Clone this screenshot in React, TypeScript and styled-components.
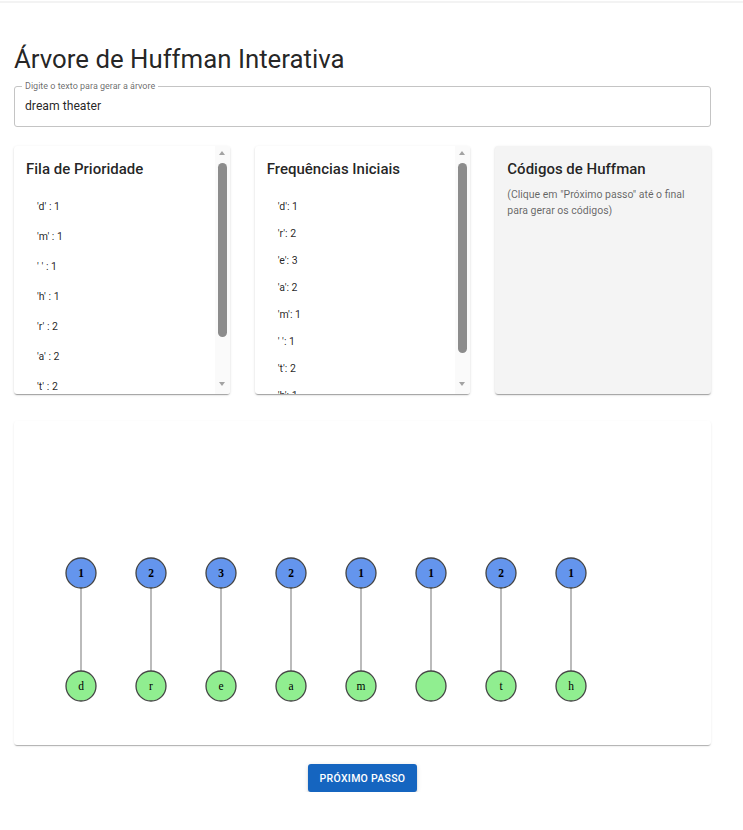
import styled, { createGlobalStyle } from "styled-components";

const GlobalStyle = createGlobalStyle`
    html, body {
        margin:0;
        padding:0;
        background:#fff;
    }
    body {
        font-family:Roboto, "Liberation Sans", Arial, sans-serif;
        color:rgba(0,0,0,0.87);
    }
    * { box-sizing:border-box; }
`;

const TopLine = styled.div`
    height:3px;
    border-bottom:2px solid #f3f3f3;
`;

const Page = styled.main`
    width:697px;
    margin-left:14px;
    padding-top:40px;
    display:flex;
    flex-direction:column;
`;

const Title = styled.h1`
    margin:0 0 11px;
    font-size:25.8px;
    font-weight:400;
    line-height:32px;
`;

const Field = styled.div`
    position:relative;
    height:41px;
    padding:0 11px;
    border:1px solid #c4c4c4;
    border-radius:3px;
    display:flex;
    align-items:center;

    input{
        border:none;
        outline:none;
        padding:0;
        margin-top:-2px;
        margin-left:-1px;
        width:100%;
        font-family:inherit;
        font-size:12.2px;
        color:rgba(0,0,0,0.87);
        background:transparent;
    }
`;

const FieldLabel = styled.label`
    position:absolute;
    top:-6px;
    left:7px;
    padding:0 3px;
    background:#fff;
    font-size:9px;
    line-height:11px;
    color:rgba(0,0,0,0.6);
`;

const Columns = styled.section`
    display:grid;
    grid-template-columns:repeat(3, 1fr);
    column-gap:25px;
    margin-top:19px;
`;

const Card = styled.div<{ $muted?: boolean }>`
    position:relative;
    height:248px;
    overflow:hidden;
    padding:11px 12px;
    border-radius:3px;
    background:${p => p.$muted ? "#f4f4f4" : "#fff"};
    box-shadow:0px 2px 1px -1px rgba(0,0,0,0.2), 0px 1px 1px 0px rgba(0,0,0,0.14), 0px 1px 3px 0px rgba(0,0,0,0.12);
`;

const ScrollTrack = styled.div`
    position:absolute;
    top:0;
    right:0;
    bottom:0;
    width:15px;
    background:#fafafa;
`;

const Arrow = styled.span<{ $down?: boolean }>`
    position:absolute;
    left:4px;
    ${p => p.$down ? "bottom:8px;" : "top:5px;"}
    width:0;
    height:0;
    border-left:3.5px solid transparent;
    border-right:3.5px solid transparent;
    ${p => p.$down ? "border-top:4px solid #a3a3a3;" : "border-bottom:4px solid #a3a3a3;"}
`;

const Thumb = styled.span`
    position:absolute;
    left:3px;
    width:9px;
    border-radius:5px;
    background:#8c8c8c;
`;

const CardTitle = styled.h2`
    margin:0;
    font-size:15px;
    font-weight:500;
    line-height:24px;
    color:rgba(0,0,0,0.87);
`;

const List = styled.ul<{ $step: number }>`
    list-style:none;
    margin:${p => p.$step === 30 ? "11px" : "12px"} 0 0;
    padding:0 0 14px 11px;

    li{
        height:${p => p.$step}px;
        line-height:${p => p.$step}px;
        font-size:10.5px;
        color:rgba(0,0,0,0.87);
        white-space:pre;
    }
`;

const Hint = styled.p`
    margin:6px 0 0;
    font-size:10.5px;
    line-height:16px;
    color:rgba(0,0,0,0.6);
`;

const TreePanel = styled.div`
    margin-top:27px;
    height:324px;
    border-radius:3px;
    background:#fff;
    box-shadow:0px 2px 1px -1px rgba(0,0,0,0.2), 0px 1px 1px 0px rgba(0,0,0,0.1), 0px 1px 3px 0px rgba(0,0,0,0.06);

    svg{ display:block; }
`;

const Actions = styled.div`
    display:flex;
    justify-content:center;
    margin-top:19px;
`;

const StepButton = styled.button`
    height:28px;
    padding:0 12px;
    border:none;
    border-radius:3px;
    background:#1565c0;
    color:#fff;
    font-family:inherit;
    font-size:10.5px;
    font-weight:500;
    letter-spacing:0.3px;
    text-transform:uppercase;
    cursor:pointer;
    box-shadow:0px 3px 1px -2px rgba(0,0,0,0.2), 0px 2px 2px 0px rgba(0,0,0,0.14), 0px 1px 5px 0px rgba(0,0,0,0.12);
`;

function Scrollbar({ thumbTop, thumbHeight }: { thumbTop: number; thumbHeight: number }) {
    return (
        <ScrollTrack aria-hidden>
            <Arrow />
            <Thumb style={{ top: thumbTop, height: thumbHeight }} />
            <Arrow $down />
        </ScrollTrack>
    );
}

const text = "dream theater";

function countFreq(s: string) {
    const map = new Map<string, number>();
    for (const c of s) map.set(c, (map.get(c) || 0) + 1);
    return [...map.entries()];
}

const freqs = countFreq(text);
const queue = [...freqs].sort((a, b) => a[1] - b[1]);

export default function App() {
    return (
        <>
            <GlobalStyle />
            <TopLine />
            <Page>
                <Title>Árvore de Huffman Interativa</Title>
                <Field>
                    <FieldLabel htmlFor="texto">Digite o texto para gerar a árvore</FieldLabel>
                    <input id="texto" type="text" defaultValue={text} />
                </Field>

                <Columns>
                    <Card>
                        <CardTitle>Fila de Prioridade</CardTitle>
                        <List $step={30}>
                            {queue.map(([c, n]) => (
                                <li key={c}>'{c}' : {n}</li>
                            ))}
                        </List>
                        <Scrollbar thumbTop={17} thumbHeight={174} />
                    </Card>
                    <Card>
                        <CardTitle>Frequências Iniciais</CardTitle>
                        <List $step={27}>
                            {freqs.map(([c, n]) => (
                                <li key={c}>'{c}': {n}</li>
                            ))}
                        </List>
                        <Scrollbar thumbTop={17} thumbHeight={190} />
                    </Card>
                    <Card $muted>
                        <CardTitle>Códigos de Huffman</CardTitle>
                        <Hint>(Clique em "Próximo passo" até o final para gerar os códigos)</Hint>
                    </Card>
                </Columns>

                <TreePanel>
                    <svg width="697" height="324">
                        {freqs.map(([c, n], i) => {
                            const x = 67 + i * 70;
                            return (
                                <g key={c}>
                                    <line x1={x} y1={152} x2={x} y2={265} stroke="#bbb" strokeWidth={2} />
                                    <circle cx={x} cy={152} r={15} fill="#6495ed" stroke="#444" strokeWidth={1.3} />
                                    <text x={x} y={156} textAnchor="middle" fontFamily="'Liberation Serif', serif" fontWeight="bold" fontSize="11.5">{n}</text>
                                    <circle cx={x} cy={265} r={15} fill="#90ee90" stroke="#444" strokeWidth={1.3} />
                                    <text x={x} y={269} textAnchor="middle" fontFamily="'Liberation Serif', serif" fontSize="11.5">{c}</text>
                                </g>
                            );
                        })}
                    </svg>
                </TreePanel>

                <Actions>
                    <StepButton type="button">Próximo passo</StepButton>
                </Actions>
            </Page>
        </>
    );
}
